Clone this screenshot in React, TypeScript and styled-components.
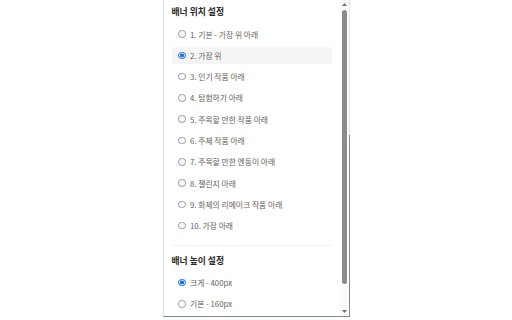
import React from "react";
import styled, { createGlobalStyle } from "styled-components";

const Global = createGlobalStyle`
  html, body { margin: 0; padding: 0; background: #ffffff; }
  body { font-family: "Noto Sans CJK KR", "Noto Sans", sans-serif; }
`;

const Frame = styled.div`
  width: 187px;
  height: 317px;
  margin: 0 auto;
  box-sizing: border-box;
  display: flex;
  border-left: 1px solid #dcdcdc;
  border-bottom: 1px solid #7c88a0;
  padding-right: 1px;
  background: linear-gradient(to bottom, #e4e4e4 135px, #7c88a0 135px) right top / 1px 100% no-repeat, #ffffff;
`;

const Viewport = styled.div`
  flex: 1;
  min-width: 0;
  overflow: hidden;
  background: #ffffff;
`;

const ScrollBar = styled.div`
  width: 9px;
  flex: none;
  display: flex;
  flex-direction: column;
  align-items: center;
  background: #fbfbfb;
`;

const Arrow = styled.div`
  width: 9px;
  height: 9px;
  flex: none;
  display: flex;
  align-items: center;
  justify-content: center;
  color: #6f6f6f;
`;

const Track = styled.div`
  flex: 1;
  width: 100%;
  display: flex;
  flex-direction: column;
  align-items: center;
  padding: 1px 0 23px 0;
  box-sizing: border-box;
`;

const Thumb = styled.div`
  width: 5px;
  flex: 1;
  border-radius: 3px;
  background: #8b8b8b;
`;

const Content = styled.div`
  padding: 6px 8px 34px 8px;
  display: flex;
  flex-direction: column;
`;

const Title = styled.h3`
  margin: 0 0 7.5px 0;
  font-size: 8.8px;
  line-height: 12px;
  font-weight: 700;
  color: #2e2a26;
`;

const List = styled.div`
  display: flex;
  flex-direction: column;
  gap: 4.3px;
`;

const Option = styled.label<{ $selected?: boolean }>`
  display: flex;
  align-items: center;
  gap: 4.5px;
  height: 17px;
  padding: 0 6.5px;
  border-radius: 3px;
  background: ${(p) => (p.$selected ? "#f5f5f5" : "transparent")};
  font-size: 7.8px;
  color: #67615a;
  cursor: pointer;
  white-space: nowrap;
`;

const Radio = styled.input`
  appearance: none;
  margin: 0;
  width: 7.5px;
  height: 7.5px;
  flex: none;
  box-sizing: border-box;
  border-radius: 50%;
  border: 1px solid #969696;
  background: #ffffff;

  &:checked {
    border-color: #1b6fe4;
    background: radial-gradient(circle, #1b6fe4 0 1.7px, #dfeaff 2.2px);
  }
`;

const Divider = styled.hr`
  border: none;
  border-top: 1px solid #eeeeee;
  margin: 10.5px 0 9px 0;
`;

const positions = [
  "1. 기본 - 가장 위 아래",
  "2. 가장 위",
  "3. 인기 작품 아래",
  "4. 탐험하기 아래",
  "5. 주목할 만한 작품 아래",
  "6. 주제 작품 아래",
  "7. 주목할 만한 엔둥이 아래",
  "8. 챌린지 아래",
  "9. 화제의 리메이크 작품 아래",
  "10. 가장 아래",
];

const heights = ["크게 - 400px", "기본 - 160px"];

const Tri = ({ down }: { down?: boolean }) => (
  <svg width="5" height="3" viewBox="0 0 5 3">
    <path d={down ? "M0 0H5L2.5 3Z" : "M0 3H5L2.5 0Z"} fill="currentColor" />
  </svg>
);

export default function App() {
  const [pos, setPos] = React.useState(1);
  const [h, setH] = React.useState(0);
  return (
    <>
      <Global />
      <Frame>
        <Viewport>
          <Content>
            <Title>배너 위치 설정</Title>
            <List>
              {positions.map((t, i) => (
                <Option key={t} $selected={pos === i}>
                  <Radio type="radio" name="pos" checked={pos === i} onChange={() => setPos(i)} />
                  {t}
                </Option>
              ))}
            </List>
            <Divider />
            <Title>배너 높이 설정</Title>
            <List>
              {heights.map((t, i) => (
                <Option key={t}>
                  <Radio type="radio" name="height" checked={h === i} onChange={() => setH(i)} />
                  {t}
                </Option>
              ))}
            </List>
          </Content>
        </Viewport>
        <ScrollBar>
          <Arrow>
            <Tri />
          </Arrow>
          <Track>
            <Thumb />
          </Track>
          <Arrow>
            <Tri down />
          </Arrow>
        </ScrollBar>
      </Frame>
    </>
  );
}
